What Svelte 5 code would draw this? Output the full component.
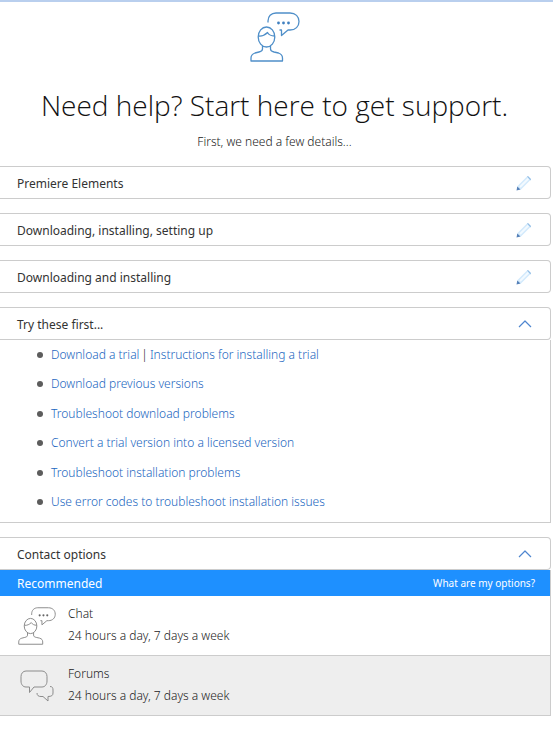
<script lang="ts">
  interface TopicLink {
    label: string;
    more?: string;
  }

  const details = ['Premiere Elements', 'Downloading, installing, setting up', 'Downloading and installing'];

  const links: TopicLink[] = [
    { label: 'Download a trial', more: 'Instructions for installing a trial' },
    { label: 'Download previous versions' },
    { label: 'Troubleshoot download problems' },
    { label: 'Convert a trial version into a licensed version' },
    { label: 'Troubleshoot installation problems' },
    { label: 'Use error codes to troubleshoot installation issues' }
  ];

  const contacts = [
    { name: 'Chat', hours: '24 hours a day, 7 days a week' },
    { name: 'Forums', hours: '24 hours a day, 7 days a week' }
  ];

  let showLinks = $state(true);
  let showContacts = $state(true);
</script>

{#snippet person()}
  <svg class="person" viewBox="0 0 50 50" aria-hidden="true">
    <path d="M18 10.500V9C18 4.500 21 1 26 1H40C45.500 1 49 4.500 49 9.500S45.500 18 40 18H38L31.500 23.500V18H29.500" />
    <ellipse cx="16.500" cy="25" rx="8.300" ry="10" />
    <path d="M8.500 24C12 24.500 15 23 17.500 20.500C19 23 21.500 24 24.500 24" />
    <path d="M12.500 34V37C12.500 39 11 39.500 9 40L5 41C2 42 1 43.500 1 46V49H32.500V46C32.500 43.500 31.500 42 28.500 41L24 40C22 39.500 20.500 39 20.500 37V34" />
    <g class="dots">
      <circle cx="28.500" cy="11" r="1.400" />
      <circle cx="33.500" cy="11" r="1.400" />
      <circle cx="38.500" cy="11" r="1.400" />
    </g>
  </svg>
{/snippet}

{#snippet bubbles()}
  <svg class="bubbles" viewBox="0 0 34 32" aria-hidden="true">
    <path d="M6 1H22C25 1 27 3.500 27 6.500V11C27 14.500 25 17 22 17H14L9.500 22.500V17H6C3 17 1 14.500 1 11V6.500C1 3.500 3 1 6 1Z" />
    <path d="M30 16.500C32.500 16.500 33 18 33 20V23C33 25.500 31.500 26.500 28 26.500V31L23 26.500H21C18.500 26.500 17 25.500 17 23" />
  </svg>
{/snippet}

{#snippet chevron()}
  <svg class="chevron" viewBox="0 0 14 8" aria-hidden="true">
    <path d="M1 7L7 1L13 7" />
  </svg>
{/snippet}

<main>
  <header>
    {@render person()}
    <h1>Need help? Start here to get support.</h1>
    <p>First, we need a few details...</p>
  </header>

  {#each details as detail}
    <button type="button" class="bar">
      <span>{detail}</span>
      <svg class="pencil" viewBox="0 0 16 16" aria-hidden="true">
        <path class="shaft" d="M1.500 11L11 1.500L14.500 5L5 14.500L1 15Z" />
        <path class="shine" d="M4 12L12.500 3.500" />
        <path class="cap" d="M11 1.500L12 1L15 4L14.500 5.500Z" />
        <path class="tip" d="M1.300 11.500L4.500 14.500L0.500 15.500Z" />
      </svg>
    </button>
  {/each}

  <section>
    <button type="button" class="bar" aria-expanded={showLinks} onclick={() => (showLinks = !showLinks)}>
      <span>Try these first...</span>
      {@render chevron()}
    </button>
    {#if showLinks}
      <ul class="links">
        {#each links as link}
          <li>
            <a href="#top">{link.label}</a>{#if link.more}<span class="divider">|</span><a href="#top">{link.more}</a>{/if}
          </li>
        {/each}
      </ul>
    {/if}
  </section>

  <section>
    <button type="button" class="bar" aria-expanded={showContacts} onclick={() => (showContacts = !showContacts)}>
      <span>Contact options</span>
      {@render chevron()}
    </button>
    {#if showContacts}
      <div class="contacts">
        <div class="recommended">
          <span>Recommended</span>
          <a href="#top">What are my options?</a>
        </div>
        {#each contacts as contact}
          <div class="contact">
            <div class="icon">
              {#if contact.name === 'Chat'}
                {@render person()}
              {:else}
                {@render bubbles()}
              {/if}
            </div>
            <div class="text">
              <div>{contact.name}</div>
              <div>{contact.hours}</div>
            </div>
          </div>
        {/each}
      </div>
    {/if}
  </section>
</main>

<style>
  :global(body) {
    margin: 0;
    background: #fff;
  }

  main {
    display: flex;
    flex-direction: column;
    gap: 14px;
    padding: 0 2px 24px 0;
    border-top: 2px solid #b9cfee;
    font-family: 'Noto Sans', 'Open Sans', sans-serif;
    font-size: 12px;
    font-weight: 300;
    color: #222;
  }

  header {
    display: flex;
    flex-direction: column;
    align-items: center;
    padding: 10px 2px 0 0;
    text-align: center;
  }

  svg {
    flex-shrink: 0;
    fill: none;
    stroke: #8c8c8c;
    stroke-linejoin: round;
  }

  .person {
    width: 38px;
    height: 38px;
    stroke-width: 1.3;
  }

  .dots {
    fill: #666;
    stroke: none;
  }

  header .person {
    width: 50px;
    height: 50px;
    stroke: #4f8fc9;
  }

  header .dots {
    fill: #4080c0;
  }

  h1 {
    margin: 20px 0 0;
    font-family: 'Open Sans', 'Noto Sans', sans-serif;
    font-size: 28px;
    font-weight: 300;
    line-height: 46px;
    color: #111;
  }

  header p {
    margin: 4px 0 0;
    line-height: 20px;
  }

  .bar {
    display: flex;
    align-items: center;
    justify-content: space-between;
    box-sizing: border-box;
    width: 100%;
    height: 33px;
    padding: 1px 18px 0 17px;
    border: 1px solid #ccc;
    border-left: 0;
    border-radius: 0 4px 4px 0;
    background: #fff;
    font: inherit;
    font-weight: 400;
    color: #333;
    text-align: left;
    cursor: pointer;
  }

  .pencil {
    width: 16px;
    height: 16px;
    stroke: none;
  }

  .shaft {
    fill: #d3eafc;
  }

  .shine {
    stroke: #f3faff;
    stroke-width: 2;
  }

  .cap {
    fill: #8fbce6;
  }

  .tip {
    fill: #5580b8;
  }

  .chevron {
    width: 14px;
    height: 8px;
    stroke: #4f86cf;
    stroke-width: 1.2;
  }

  .links {
    display: flex;
    flex-direction: column;
    justify-content: space-between;
    box-sizing: border-box;
    min-height: 183px;
    margin: 0;
    padding: 4px 0 9px 37px;
    border: 1px solid #ccc;
    border-width: 0 1px 1px 0;
    list-style: none;
  }

  .links li {
    display: flex;
    align-items: center;
    line-height: 22px;
  }

  .links li::before {
    content: '';
    width: 6px;
    height: 6px;
    margin-right: 8px;
    border-radius: 50%;
    background: #5c5c5c;
  }

  a {
    color: #1a66c0;
    text-decoration: none;
  }

  a:hover {
    text-decoration: underline;
  }

  .divider {
    margin: 0 2px;
  }

  .contacts {
    border: 1px solid #ccc;
    border-width: 0 1px 0 0;
  }

  .recommended {
    display: flex;
    align-items: center;
    justify-content: space-between;
    height: 26px;
    padding: 0 15px 0 17px;
    background: #1e90ff;
    font-weight: 400;
    color: #fff;
  }

  .recommended a {
    font-size: 10px;
    color: #fff;
  }

  .contact {
    display: flex;
    align-items: center;
    height: 59px;
    padding-left: 18px;
    border-bottom: 1px solid #ccc;
    line-height: 22px;
  }

  .contact:last-child {
    background: #eee;
  }

  .icon {
    display: flex;
    width: 50px;
  }

  .text {
    padding-bottom: 2px;
  }

  .bubbles {
    width: 34px;
    height: 32px;
    margin-left: 2px;
  }
</style>
